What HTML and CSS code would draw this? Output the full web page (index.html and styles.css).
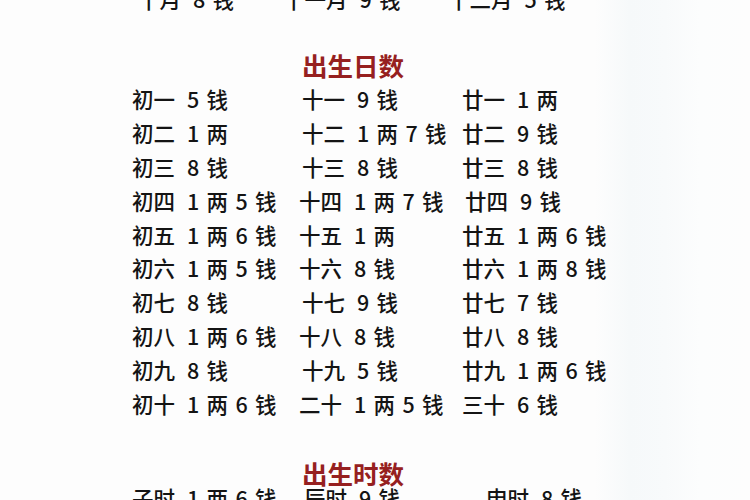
FILE: index.html
```html
<!DOCTYPE html>
<html lang="zh-CN">
<head>
<meta charset="utf-8">
<title>出生日数</title>
<link rel="stylesheet" href="styles.css">
</head>
<body>
<div class="page">
  <div class="months">
    <div class="item"><span class="d">十月</span><span class="v">8 钱</span></div>
    <div class="item"><span class="d">十一月</span><span class="v">9 钱</span></div>
    <div class="item"><span class="d">十二月</span><span class="v">5 钱</span></div>
  </div>

  <h2 class="title t1">出生日数</h2>

  <div class="days">
    <div class="item"><span class="d">初一</span><span class="v">5 钱</span></div>
    <div class="item in"><span class="d">十一</span><span class="v">9 钱</span></div>
    <div class="item"><span class="d">廿一</span><span class="v">1 两</span></div>

    <div class="item"><span class="d">初二</span><span class="v">1 两</span></div>
    <div class="item in"><span class="d">十二</span><span class="v">1 两 7 钱</span></div>
    <div class="item"><span class="d">廿二</span><span class="v">9 钱</span></div>

    <div class="item"><span class="d">初三</span><span class="v">8 钱</span></div>
    <div class="item in"><span class="d">十三</span><span class="v">8 钱</span></div>
    <div class="item"><span class="d">廿三</span><span class="v">8 钱</span></div>

    <div class="item"><span class="d">初四</span><span class="v">1 两 5 钱</span></div>
    <div class="item"><span class="d">十四</span><span class="v">1 两 7 钱</span></div>
    <div class="item in"><span class="d">廿四</span><span class="v">9 钱</span></div>

    <div class="item"><span class="d">初五</span><span class="v">1 两 6 钱</span></div>
    <div class="item"><span class="d">十五</span><span class="v">1 两</span></div>
    <div class="item"><span class="d">廿五</span><span class="v">1 两 6 钱</span></div>

    <div class="item"><span class="d">初六</span><span class="v">1 两 5 钱</span></div>
    <div class="item"><span class="d">十六</span><span class="v">8 钱</span></div>
    <div class="item"><span class="d">廿六</span><span class="v">1 两 8 钱</span></div>

    <div class="item"><span class="d">初七</span><span class="v">8 钱</span></div>
    <div class="item in"><span class="d">十七</span><span class="v">9 钱</span></div>
    <div class="item"><span class="d">廿七</span><span class="v">7 钱</span></div>

    <div class="item"><span class="d">初八</span><span class="v">1 两 6 钱</span></div>
    <div class="item"><span class="d">十八</span><span class="v">8 钱</span></div>
    <div class="item"><span class="d">廿八</span><span class="v">8 钱</span></div>

    <div class="item"><span class="d">初九</span><span class="v">8 钱</span></div>
    <div class="item in"><span class="d">十九</span><span class="v">5 钱</span></div>
    <div class="item"><span class="d">廿九</span><span class="v">1 两 6 钱</span></div>

    <div class="item"><span class="d">初十</span><span class="v">1 两 6 钱</span></div>
    <div class="item"><span class="d">二十</span><span class="v">1 两 5 钱</span></div>
    <div class="item"><span class="d">三十</span><span class="v">6 钱</span></div>
  </div>

  <h2 class="title t2">出生时数</h2>

  <div class="hours">
    <div class="item"><span class="d">子时</span><span class="v">1 两 6 钱</span></div>
    <div class="item"><span class="d">辰时</span><span class="v">9 钱</span></div>
    <div class="item"><span class="d">申时</span><span class="v">8 钱</span></div>
  </div>
</div>
</body>
</html>
```

FILE: styles.css
```css
html, body {
  margin: 0;
  padding: 0;
}

body {
  width: 750px;
  height: 500px;
  overflow: hidden;
  background: linear-gradient(to right, #fdfdfd 0, #fdfdfd 595px, #f6f9fa 630px, #f8fafb 665px, #fcfdfd 700px, #fdfdfd 750px);
  font-family: "Noto Sans CJK SC", "Noto Sans", sans-serif;
  color: #141414;
}

.page {
  display: flex;
  flex-direction: column;
}

.item {
  display: flex;
  gap: 12px;
  white-space: nowrap;
  font-size: 21.5px;
  font-weight: 500;
}

.v {
  word-spacing: 2.5px;
}

.item.in {
  padding-left: 3px;
}

.months {
  display: grid;
  grid-template-columns: 145px 165px auto;
  padding-left: 138px;
  line-height: 34px;
  height: 34px;
  margin-top: -18px;
}

.title {
  margin: 0;
  font-size: 25.5px;
  font-weight: bold;
  line-height: 26px;
  color: #962020;
  padding-left: 302px;
}

.t1 {
  margin-top: 36px;
}

.days {
  display: grid;
  grid-template-columns: 167px 163px auto;
  grid-auto-rows: 33.8px;
  align-items: center;
  padding-left: 132px;
  margin-top: 4px;
}

.t2 {
  margin-top: 40px;
}

.hours {
  display: grid;
  grid-template-columns: 172px 182px auto;
  padding-left: 132px;
  line-height: 20px;
  margin-top: 2px;
}
```
